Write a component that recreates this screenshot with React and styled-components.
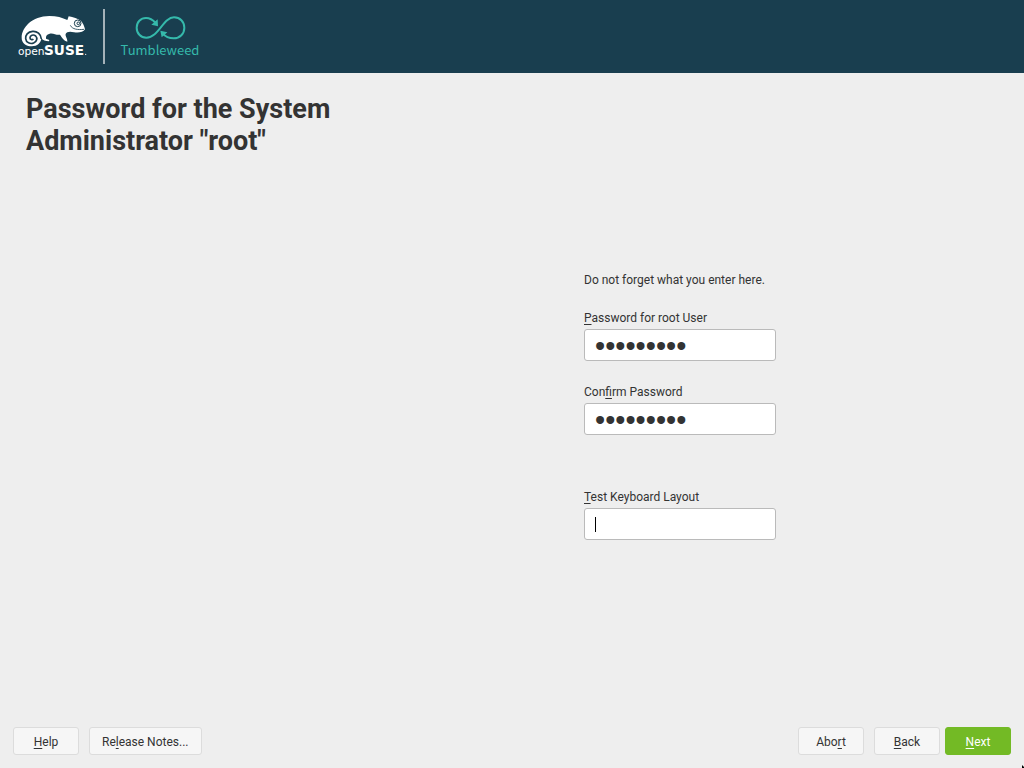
import React from 'react';
import styled, { createGlobalStyle } from 'styled-components';

const Global = createGlobalStyle`
  *, *::before, *::after { box-sizing: border-box; }
  body { margin: 0; background: #eee; color: #333; font: 12px/16px Roboto, sans-serif; }
`;

const Page = styled.div`
  min-height: 100vh;
  display: flex;
  flex-direction: column;
`;

const Header = styled.header`
  display: flex;
  align-items: flex-start;
  gap: 15px;
  height: 73px;
  padding: 9px 18px;
  background: #193e4f;
`;

const Divider = styled.span`
  width: 2px;
  height: 55px;
  background: #a4b2b9;
`;

const Product = styled.div`
  display: flex;
  flex-direction: column;
  align-items: center;
  min-width: 80px;
  padding-top: 6px;
  color: #35b9ab;
  font: 13px/18px "Noto Sans CJK SC", sans-serif;
`;

const Main = styled.main`
  flex: 1;
  display: grid;
  grid-template-columns: 1fr 2fr;
  padding: 20px 8px 8px;
`;

const Title = styled.h1`
  margin: 0;
  padding-left: 18px;
  font-size: 27px;
  line-height: 32px;
  font-weight: 700;
`;

const Form = styled.form`
  justify-self: center;
  align-self: center;
  width: 192px;
  display: flex;
  flex-direction: column;
`;

const Note = styled.p`
  margin: 0 0 22px;
  white-space: nowrap;
`;

const Field = styled.div`
  position: relative;
  display: flex;
  flex-direction: column;
  gap: 3px;
  margin-bottom: ${(p) => p.$gap || 0}px;
`;

const Key = styled.u`
  text-decoration: underline;
  text-decoration-skip-ink: none;
  text-underline-offset: 2px;
  text-decoration-thickness: 1px;
`;

const Input = styled.input`
  width: 100%;
  height: 32px;
  padding: 0 10px;
  border: 1px solid #bababa;
  border-radius: 3px;
  background: #fff;
  color: #333;
  font: 12px/16px Roboto, sans-serif;
  caret-color: transparent;
  outline: none;

  &[type='password'] {
    padding-top: 2px;
    font: 29px/28px "Liberation Sans", sans-serif;
  }
`;

const Caret = styled.span`
  position: absolute;
  left: 11px;
  bottom: 8px;
  width: 1px;
  height: 15px;
  background: #000;
`;

const Footer = styled.footer`
  display: flex;
  justify-content: space-between;
  padding: 0 13px 13px;
`;

const Group = styled.div`
  display: flex;
  gap: ${(p) => p.$gap || 10}px;
`;

const Button = styled.button`
  min-width: 66px;
  height: 28px;
  padding: 2px 12px 0;
  border: 1px solid ${(p) => (p.$primary ? '#73ba25' : '#dcdcdc')};
  border-radius: 3px;
  background: ${(p) => (p.$primary ? '#73ba25' : '#f6f6f6')};
  color: ${(p) => (p.$primary ? '#fff' : '#333')};
  font: 12px/16px Roboto, sans-serif;
`;

const Pointer = styled.svg`
  position: fixed;
  right: 0;
  bottom: 0;
`;

function OpenSuseLogo() {
  return (
    <svg width="70" height="49" viewBox="24 12 210 147" role="img" aria-label="openSUSE">
      <path
        fill="#fff"
        d="M35 98 C35 68 66 33 118 33 C140 33 157 38 172 45 L176 34 C190 37 203 41 213 48 C219 55 223 63 225 73 C220 83 204 84 192 82 C180 79 170 80 167 87 C165 94 173 100 172 110 C161 107 156 98 150 89 C140 92 130 83 119 86 C110 88 107 93 108 101 L118 105 L117 109 C106 109 98 106 94 100 C93 114 82 124 65 124 C47 124 35 114 35 98 Z"
      />
      <path
        fill="none"
        stroke="#193e4f"
        strokeWidth="5"
        d="M94 102 C93 87 81 78 68 79 C53 80 46 91 47 101 C48 113 61 118 71 114 C81 110 83 99 77 93 C70 87 60 91 60 98 C60 104 67 106 70 102"
      />
      <circle cx="203" cy="55" r="10" fill="#fff" stroke="#193e4f" strokeWidth="3" />
      <circle cx="205" cy="55" r="4" fill="none" stroke="#193e4f" strokeWidth="3" />
      <path fill="none" stroke="#193e4f" strokeWidth="2.5" d="M181 61 C187 73 203 75 222 73" />
      <g fill="#fff">
        <text x="24" y="149" fontFamily="DejaVu Sans" fontSize="32">open</text>
        <text x="102" y="149" fontFamily="DejaVu Sans" fontWeight="700" fontSize="41">SUSE</text>
        <circle cx="227" cy="148" r="2" />
      </g>
    </svg>
  );
}

function TumbleweedMark() {
  return (
    <svg width="51" height="26" viewBox="120 30 153 78" aria-hidden="true">
      <path
        fill="none"
        stroke="#35b9ab"
        strokeWidth="6"
        d="M203 85 C211 95 222 100 236 100 C255 100 268 86 268 68 C268 50 255 37 237 37 C205 37 191 98 154 98 C137 98 125 85 125 68 C125 51 137 39 153 39 C165 39 174 45 182 54"
      />
      <path fill="#35b9ab" d="M188 43 L189 64 L169 59 Z M196 77 L217 82 L200 97 Z" />
    </svg>
  );
}

export default function App() {
  return (
    <>
      <Global />
      <Page>
        <Header>
          <OpenSuseLogo />
          <Divider />
          <Product>
            <TumbleweedMark />
            Tumbleweed
          </Product>
        </Header>
        <Main>
          <Title>Password for the System Administrator "root"</Title>
          <Form id="root-password">
            <Note>Do not forget what you enter here.</Note>
            <Field $gap={23}>
              <label htmlFor="password"><Key>P</Key>assword for root User</label>
              <Input id="password" type="password" defaultValue="123456789" />
            </Field>
            <Field $gap={54}>
              <label htmlFor="confirm">Con<Key>f</Key>irm Password</label>
              <Input id="confirm" type="password" defaultValue="123456789" />
            </Field>
            <Field>
              <label htmlFor="layout"><Key>T</Key>est Keyboard Layout</label>
              <Input id="layout" type="text" />
              <Caret />
            </Field>
          </Form>
        </Main>
        <Footer>
          <Group>
            <Button type="button"><Key>H</Key>elp</Button>
            <Button type="button">Re<Key>l</Key>ease Notes...</Button>
          </Group>
          <Group>
            <Button type="button">Abo<Key>r</Key>t</Button>
            <Group $gap={5}>
              <Button type="button"><Key>B</Key>ack</Button>
              <Button type="button" $primary><Key>N</Key>ext</Button>
            </Group>
          </Group>
        </Footer>
      </Page>
      <Pointer width="2" height="3" viewBox="0 0 2 3" aria-hidden="true">
        <path d="M0 0 L2 2 V3 H0 Z" />
      </Pointer>
    </>
  );
}
